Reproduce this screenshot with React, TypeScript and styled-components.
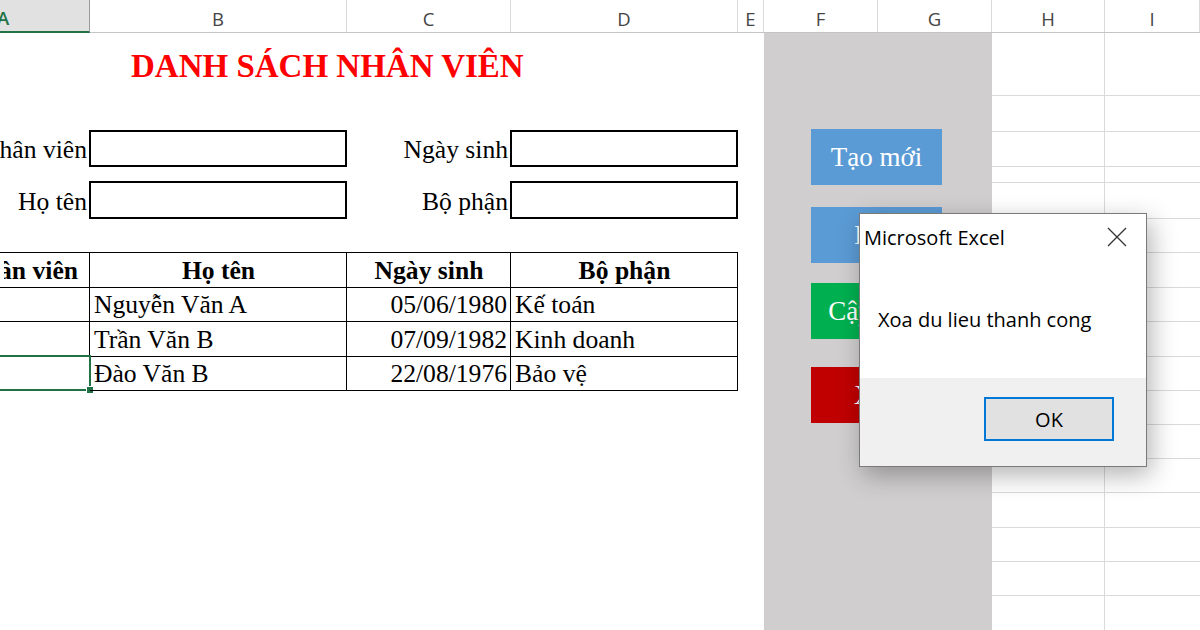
import React from 'react';
import styled, { createGlobalStyle } from 'styled-components';

const GlobalStyle = createGlobalStyle`
  html, body {
    margin: 0;
    padding: 0;
    background: #fff;
  }
  body {
    width: 1200px;
    height: 630px;
    overflow: hidden;
  }
`;

const columns = [
  { name: 'A', width: 90 },
  { name: 'B', width: 257 },
  { name: 'C', width: 164 },
  { name: 'D', width: 227 },
  { name: 'E', width: 26 },
  { name: 'F', width: 114 },
  { name: 'G', width: 114 },
  { name: 'H', width: 113 },
  { name: 'I', width: 95 },
];

const rowHeights = [63, 36, 35, 16, 36, 34, 35, 34, 35, 34, 34, 34, 34, 35, 34, 34, 35];

const nhanVien = [
  { hoTen: 'Nguyễn Văn A', ngaySinh: '05/06/1980', boPhan: 'Kế toán' },
  { hoTen: 'Trần Văn B', ngaySinh: '07/09/1982', boPhan: 'Kinh doanh' },
  { hoTen: 'Đào Văn B', ngaySinh: '22/08/1976', boPhan: 'Bảo vệ' },
];

const nutLenh = [
  { text: 'Tạo mới', color: '#5b9bd5', top: 96 },
  { text: 'Lưu', color: '#5b9bd5', top: 22 },
  { text: 'Cập nhật', color: '#00b050', top: 20 },
  { text: 'Xóa', color: '#c00000', top: 28 },
];

const Root = styled.div`
  position: relative;
  width: 1200px;
  height: 630px;
  overflow: hidden;
  background: #fff;
`;

const HeaderBar = styled.div`
  display: flex;
  height: 33px;
  border-bottom: 1px solid #c4c4c4;
  box-sizing: border-box;
  background: #fff;
`;

const HeaderCell = styled.div<{ $w: number; $active?: boolean }>`
  flex: 0 0 ${(p) => p.$w}px;
  box-sizing: border-box;
  display: flex;
  align-items: center;
  justify-content: ${(p) => (p.$active ? 'flex-start' : 'center')};
  padding-top: 4px;
  border-right: 1px solid ${(p) => (p.$active ? '#9c9c9c' : '#dadada')};
  border-bottom: ${(p) => (p.$active ? '2px solid #217346' : 'none')};
  margin-bottom: ${(p) => (p.$active ? '-1px' : '0')};
  background: ${(p) => (p.$active ? '#e1e1e1' : '#fff')};
  color: ${(p) => (p.$active ? '#217346' : '#444')};
  font-family: 'Open Sans', 'Noto Sans', sans-serif;
  font-size: 18.5px;
  font-weight: ${(p) => (p.$active ? 600 : 400)};
  overflow: hidden;

  span {
    margin-left: ${(p) => (p.$active ? '-3px' : '0')};
  }
`;

const Sheet = styled.div`
  display: grid;
  grid-template-columns: ${columns.map((c) => (c.name === 'I' ? '1fr' : `${c.width}px`)).join(' ')};
  grid-template-rows: ${rowHeights.map((h) => `${h}px`).join(' ')};
  height: 597px;
  overflow: hidden;
  font-family: 'Liberation Serif', 'Times New Roman', serif;
  color: #000;
`;

const TitleCell = styled.div`
  grid-column: 2 / 5;
  grid-row: 1;
  display: flex;
  align-items: center;
  padding: 3px 0 0 41px;
  color: #ff0000;
  font-size: 33px;
  font-weight: bold;
  white-space: nowrap;
`;

const LabelCell = styled.div<{ $col: number; $row: number }>`
  grid-column: ${(p) => p.$col};
  grid-row: ${(p) => p.$row};
  display: flex;
  align-items: flex-end;
  justify-content: flex-end;
  padding: 0 3px 2px 0;
  font-size: 25.6px;
  white-space: nowrap;
  overflow: hidden;
`;

const InputBox = styled.div<{ $col: number; $row: number }>`
  grid-column: ${(p) => p.$col};
  grid-row: ${(p) => p.$row};
  margin: -2px 0 0 -1px;
  border: 2px solid #000;
  background: #fff;
`;

const TableCell = styled.div<{
  $col: number;
  $row: number;
  $head?: boolean;
  $align?: 'left' | 'center' | 'right';
}>`
  position: relative;
  grid-column: ${(p) => p.$col};
  grid-row: ${(p) => p.$row};
  box-sizing: border-box;
  display: flex;
  align-items: flex-end;
  justify-content: ${(p) =>
    p.$align === 'right' ? 'flex-end' : p.$align === 'center' ? 'center' : 'flex-start'};
  padding: 0 3px 1px 4px;
  border-right: 1px solid #000;
  border-bottom: 1px solid #000;
  border-top: ${(p) => (p.$head ? '1px solid #000' : 'none')};
  margin-top: ${(p) => (p.$head ? '-1px' : '0')};
  font-size: 25.6px;
  font-weight: ${(p) => (p.$head ? 'bold' : 'normal')};
  white-space: nowrap;
`;

const ClipText = styled.span`
  display: flex;
  justify-content: flex-end;
  width: 100%;
  padding-right: 8px;
  overflow: hidden;
`;

const Selection = styled.div`
  position: absolute;
  top: -2px;
  right: -2px;
  bottom: -1px;
  left: -4px;
  border: 2px solid #217346;
  pointer-events: none;
`;

const FillHandle = styled.div`
  position: absolute;
  right: -5px;
  bottom: -5px;
  width: 6px;
  height: 6px;
  background: #217346;
  border: 1px solid #fff;
`;

const GridCell = styled.div<{ $col: number; $row: number }>`
  grid-column: ${(p) => p.$col};
  grid-row: ${(p) => p.$row};
  border-bottom: 1px solid #dadada;
  border-right: ${(p) => (p.$col === 8 ? '1px solid #dadada' : 'none')};
`;

const Panel = styled.div`
  grid-column: 6 / 8;
  grid-row: 1 / -1;
  display: flex;
  flex-direction: column;
  align-items: flex-start;
  padding-left: 47px;
  background: #d0cece;
`;

const ShapeButton = styled.div<{ $bg: string; $top: number }>`
  width: 131px;
  height: 56px;
  margin-top: ${(p) => p.$top}px;
  display: flex;
  align-items: center;
  justify-content: center;
  background: ${(p) => p.$bg};
  color: #fff;
  font-size: 27px;
  white-space: nowrap;
`;

const Dialog = styled.div`
  position: absolute;
  left: 859px;
  top: 213px;
  width: 288px;
  height: 254px;
  box-sizing: border-box;
  display: flex;
  flex-direction: column;
  background: #fff;
  border: 1px solid #7a7a7a;
  box-shadow: 4px 8px 24px rgba(0, 0, 0, 0.3);
  font-family: 'Open Sans', 'Noto Sans', sans-serif;
  color: #000;
`;

const DialogTitle = styled.div`
  height: 46px;
  box-sizing: border-box;
  display: flex;
  align-items: center;
  justify-content: space-between;
  padding: 0 19px 0 4px;
  font-size: 20px;
`;

const DialogBody = styled.div`
  flex: 1;
  display: flex;
  align-items: center;
  padding-left: 18px;
  font-size: 20px;
`;

const DialogFooter = styled.div`
  height: 88px;
  box-sizing: border-box;
  display: flex;
  justify-content: flex-end;
  align-items: flex-start;
  padding: 19px 32px 0 0;
  background: #f0f0f0;
`;

const OkButton = styled.div`
  width: 130px;
  height: 44px;
  box-sizing: border-box;
  display: flex;
  align-items: center;
  justify-content: center;
  border: 2px solid #0078d7;
  background: #e1e1e1;
  font-size: 20px;
`;

function CloseIcon() {
  return (
    <svg width="20" height="20" viewBox="0 0 20 20">
      <path d="M1 1 L19 19 M19 1 L1 19" stroke="#333" strokeWidth="1.3" fill="none" />
    </svg>
  );
}

export default function App() {
  const gridCells: React.ReactNode[] = [];
  rowHeights.forEach((_, i) => {
    gridCells.push(<GridCell key={`h${i}`} $col={8} $row={i + 1} />);
    gridCells.push(<GridCell key={`i${i}`} $col={9} $row={i + 1} />);
  });

  return (
    <Root>
      <GlobalStyle />
      <HeaderBar>
        {columns.map((c) => (
          <HeaderCell key={c.name} $w={c.width} $active={c.name === 'A'}>
            <span>{c.name}</span>
          </HeaderCell>
        ))}
      </HeaderBar>

      <Sheet>
        <TitleCell>DANH SÁCH NHÂN VIÊN</TitleCell>

        <LabelCell $col={1} $row={3}>Mã nhân viên</LabelCell>
        <InputBox $col={2} $row={3} />
        <LabelCell $col={3} $row={3}>Ngày sinh</LabelCell>
        <InputBox $col={4} $row={3} />

        <LabelCell $col={1} $row={5}>Họ tên</LabelCell>
        <InputBox $col={2} $row={5} />
        <LabelCell $col={3} $row={5}>Bộ phận</LabelCell>
        <InputBox $col={4} $row={5} />

        <TableCell $col={1} $row={7} $head>
          <ClipText>Mã nhân viên</ClipText>
        </TableCell>
        <TableCell $col={2} $row={7} $head $align="center">Họ tên</TableCell>
        <TableCell $col={3} $row={7} $head $align="center">Ngày sinh</TableCell>
        <TableCell $col={4} $row={7} $head $align="center">Bộ phận</TableCell>

        {nhanVien.map((nv, i) => (
          <React.Fragment key={nv.ngaySinh}>
            <TableCell $col={1} $row={8 + i}>
              {i === nhanVien.length - 1 && (
                <Selection>
                  <FillHandle />
                </Selection>
              )}
            </TableCell>
            <TableCell $col={2} $row={8 + i}>{nv.hoTen}</TableCell>
            <TableCell $col={3} $row={8 + i} $align="right">{nv.ngaySinh}</TableCell>
            <TableCell $col={4} $row={8 + i}>{nv.boPhan}</TableCell>
          </React.Fragment>
        ))}

        <Panel>
          {nutLenh.map((b) => (
            <ShapeButton key={b.text} $bg={b.color} $top={b.top}>
              {b.text}
            </ShapeButton>
          ))}
        </Panel>

        {gridCells}
      </Sheet>

      <Dialog>
        <DialogTitle>
          <span>Microsoft Excel</span>
          <CloseIcon />
        </DialogTitle>
        <DialogBody>Xoa du lieu thanh cong</DialogBody>
        <DialogFooter>
          <OkButton>OK</OkButton>
        </DialogFooter>
      </Dialog>
    </Root>
  );
}
